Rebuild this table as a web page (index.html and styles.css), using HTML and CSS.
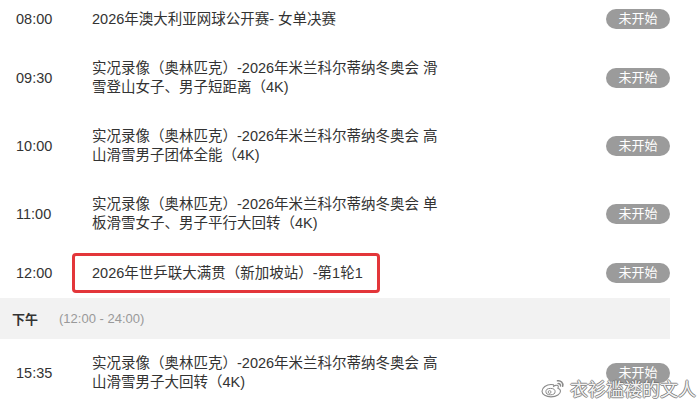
FILE: index.html
```html
<!DOCTYPE html>
<html lang="zh-CN">
<head>
<meta charset="utf-8">
<title>节目单</title>
<link rel="stylesheet" href="styles.css">
</head>
<body>
<div class="schedule">
  <div class="row">
    <div class="time">08:00</div>
    <div class="title">2026年澳大利亚网球公开赛- 女单决赛</div>
    <div class="badge">未开始</div>
  </div>
  <div class="row">
    <div class="time">09:30</div>
    <div class="title">实况录像（奥林匹克）-2026年米兰科尔蒂纳冬奥会 滑雪登山女子、男子短距离（4K)</div>
    <div class="badge">未开始</div>
  </div>
  <div class="row">
    <div class="time">10:00</div>
    <div class="title">实况录像（奥林匹克）-2026年米兰科尔蒂纳冬奥会 高山滑雪男子团体全能（4K)</div>
    <div class="badge">未开始</div>
  </div>
  <div class="row">
    <div class="time">11:00</div>
    <div class="title">实况录像（奥林匹克）-2026年米兰科尔蒂纳冬奥会 单板滑雪女子、男子平行大回转（4K)</div>
    <div class="badge">未开始</div>
  </div>
  <div class="row">
    <div class="time">12:00</div>
    <div class="title title-marked">2026年世乒联大满贯（新加坡站）-第1轮1</div>
    <div class="badge">未开始</div>
  </div>
  <div class="period">
    <span class="period-name">下午</span>
    <span class="period-range">(12:00 - 24:00)</span>
  </div>
  <div class="row">
    <div class="time">15:35</div>
    <div class="title">实况录像（奥林匹克）-2026年米兰科尔蒂纳冬奥会 高山滑雪男子大回转（4K)</div>
    <div class="badge">未开始</div>
  </div>
</div>
<div class="watermark">
  <svg class="wb-logo" width="28" height="20" viewBox="0 0 28 20">
    <path d="M11 6.5c-4.5 0-9 3.2-9 6.8 0 3.3 4.2 5.6 9 5.6 5.8 0 9.5-3 9.5-5.9 0-1.7-1.4-2.4-2.6-2.8 1-2.1 0.2-3.4-2.2-2.8-1.2 0.3-2 0.8-2 0.8 0.4-1.4-0.2-1.7-2.7-1.7z" fill="#fff" stroke="#8a8a8a" stroke-width="1.1"/>
    <ellipse cx="10.5" cy="13.6" rx="4.6" ry="3.2" fill="#fff" stroke="#8a8a8a" stroke-width="1"/>
    <circle cx="9.6" cy="14" r="1.4" fill="#fff" stroke="#8a8a8a" stroke-width="0.9"/>
    <path d="M17.5 2.8c3.2-0.6 6 2 5.2 5.3" fill="none" stroke="#8a8a8a" stroke-width="1.6" stroke-linecap="round"/>
    <path d="M18 5.6c1.5-0.3 2.8 0.9 2.5 2.4" fill="none" stroke="#8a8a8a" stroke-width="1.4" stroke-linecap="round"/>
  </svg>
  <span class="wb-name">衣衫褴褛的文人</span>
</div>
</body>
</html>
```
FILE: styles.css
```css
html, body {
  margin: 0;
  padding: 0;
  background: #ffffff;
}

body {
  width: 700px;
  height: 404px;
  overflow: hidden;
  position: relative;
  font-family: "Liberation Sans", "Noto Sans CJK SC", sans-serif;
  color: #333333;
}

.schedule {
  width: 670px;
  margin-top: -6px;
  display: flex;
  flex-direction: column;
}

.row {
  display: flex;
  align-items: center;
  padding: 15px 0 15px 16px;
}

.time {
  width: 76px;
  flex: none;
  font-size: 14.5px;
  line-height: 19px;
}

.title {
  width: 352px;
  flex: none;
  font-size: 14.5px;
  line-height: 19px;
}

.title-marked {
  position: relative;
}

.title-marked::after {
  content: "";
  position: absolute;
  left: -20px;
  top: -11px;
  width: 302px;
  height: 34px;
  border: 3px solid #e3363a;
  border-radius: 4px;
}

.badge {
  margin-left: auto;
  width: 64px;
  height: 20px;
  border-radius: 10px;
  background: #9b9b9b;
  color: #ffffff;
  font-size: 13px;
  line-height: 20px;
  text-align: center;
  flex: none;
}

.period {
  height: 41px;
  background: #f2f2f2;
  display: flex;
  align-items: center;
  gap: 21px;
  padding-left: 12px;
}

.period-name {
  font-size: 13px;
  font-weight: bold;
  color: #333333;
}

.period-range {
  font-size: 13px;
  color: #999999;
}

.watermark {
  position: absolute;
  right: 4px;
  bottom: 5px;
  display: flex;
  align-items: center;
  gap: 2px;
}

.wb-name {
  font-family: "Noto Sans CJK SC", sans-serif;
  font-size: 18px;
  line-height: 22px;
  color: rgba(255, 255, 255, 0.92);
  text-shadow: 0 0 1px #7a7a7a, 1px 0 0 rgba(110,110,110,0.7), -1px 0 0 rgba(110,110,110,0.7), 0 1px 0 rgba(110,110,110,0.7), 0 -1px 0 rgba(110,110,110,0.7);
}
```
